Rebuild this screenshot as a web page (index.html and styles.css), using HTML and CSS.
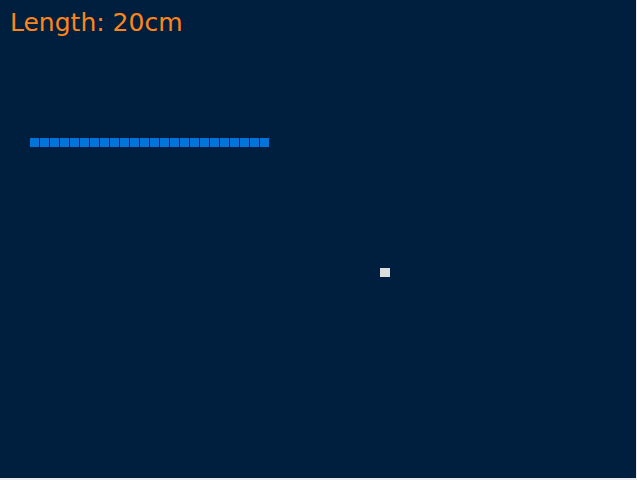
FILE: index.html
```html
<!DOCTYPE html>
<html>
<head>
<meta charset="utf-8">
<link rel="stylesheet" href="styles.css">
</head>
<body>
<div class="board">
  <div class="score">Length: 20cm</div>
  <div class="snake" style="left:30px;top:138px">
    <span class="seg"></span><span class="seg"></span><span class="seg"></span><span class="seg"></span>
    <span class="seg"></span><span class="seg"></span><span class="seg"></span><span class="seg"></span>
    <span class="seg"></span><span class="seg"></span><span class="seg"></span><span class="seg"></span>
    <span class="seg"></span><span class="seg"></span><span class="seg"></span><span class="seg"></span>
    <span class="seg"></span><span class="seg"></span><span class="seg"></span><span class="seg"></span>
    <span class="seg"></span><span class="seg"></span><span class="seg"></span><span class="seg"></span>
  </div>
  <div class="food" style="left:380px;top:268px"></div>
</div>
</body>
</html>
```
FILE: styles.css
```css
html, body {
  margin: 0;
  padding: 0;
  background: #ececec;
}
.board {
  position: relative;
  width: 636px;
  height: 478px;
  background: #001f3f;
  overflow: hidden;
}
.score {
  font-family: "DejaVu Sans", sans-serif;
  font-size: 25px;
  line-height: 25px;
  color: #ff851b;
  padding: 10px 0 0 10px;
}
.snake {
  position: absolute;
  display: flex;
  gap: 1px;
}
.seg {
  display: block;
  width: 9px;
  height: 9px;
  background: #0074d9;
}
.food {
  position: absolute;
  width: 10px;
  height: 9px;
  background: #dddddd;
}
```
